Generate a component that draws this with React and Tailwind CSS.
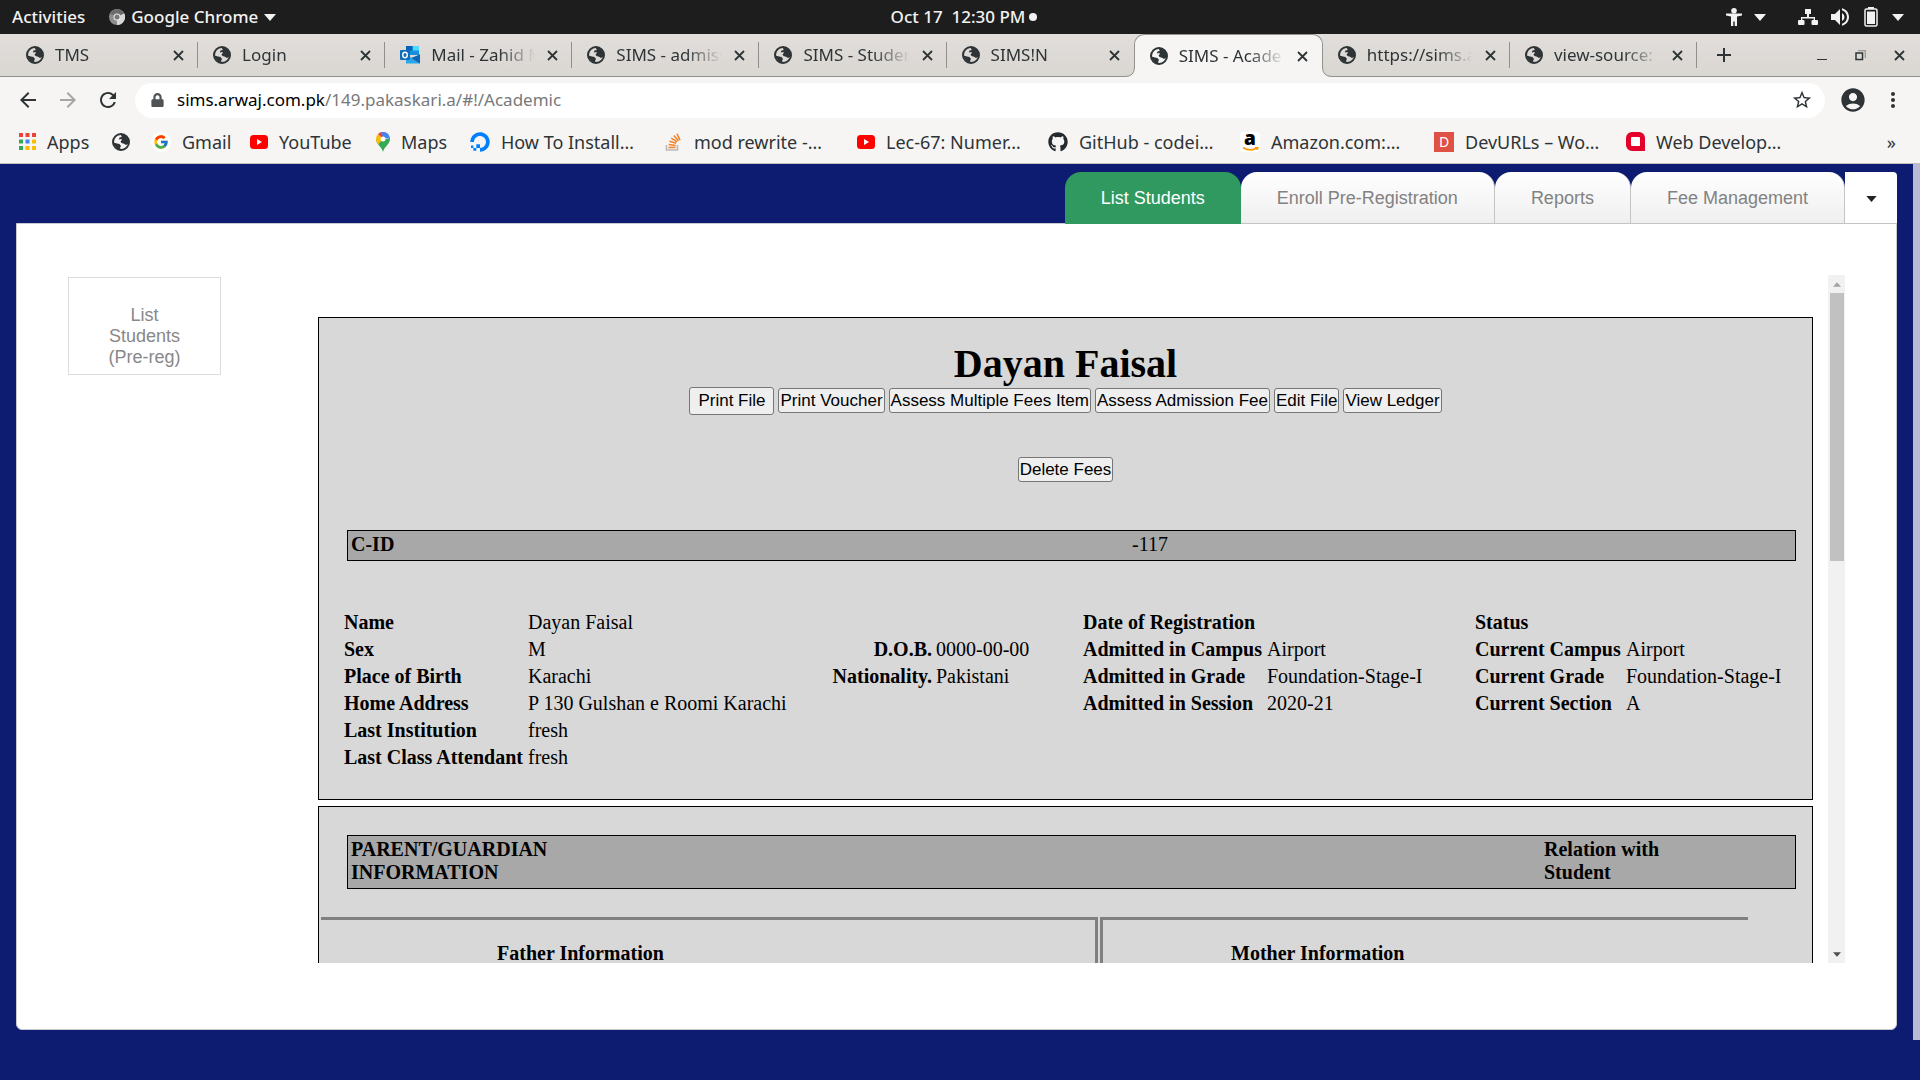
import React from "react";
import { FaGithub, FaDigitalOcean, FaLock } from "react-icons/fa";
import { FcGoogle } from "react-icons/fc";
import { MdAccountCircle, MdArrowBack, MdArrowForward, MdRefresh, MdStarBorder, MdMoreVert, MdVolumeUp, MdAdd } from "react-icons/md";

function Globe() {
  return (
    <svg viewBox="0 0 18 18" className="size-[18px] shrink-0" fill="none">
      <circle cx="9" cy="9" r="8" stroke="#2e3436" strokeWidth="2" />
      <path d="M6 1.5C2.500 3 1 6 1.500 9.500L5 10.500 7.500 11 9 13 8 15 9 17 5.500 16 2 12 1 8 3 3.500Z" fill="#2e3436" />
      <path d="M9.500 1L15 3.500 17 8 16.800 10.500 14 12 12 10.800 9.500 10 8.500 8.500 9.800 7 9.500 6 6.800 6.500 7.500 4.500 9.800 4 9 2.500Z" fill="#2e3436" />
    </svg>
  );
}

function Outlook() {
  return (
    <svg viewBox="0 0 20 20" className="size-5 shrink-0">
      <path d="M6 1h13v9H6z" fill="#1490df" />
      <path d="M12.500 1H19v4.500h-6.500z" fill="#50d9ff" />
      <path d="M6 1h6.500v4.500H6z" fill="#0364b8" />
      <path d="M6 9l7 5 7-5v9.500H6z" fill="#28a8ea" />
      <path d="M20 9.500v9L11 13z" fill="#1066b5" />
      <rect x="0" y="5" width="10" height="10" rx="1" fill="#0f6cbd" />
      <ellipse cx="5" cy="10" rx="2.300" ry="2.700" fill="none" stroke="#fff" strokeWidth="1.400" />
    </svg>
  );
}

function CloseX() {
  return (
    <svg viewBox="0 0 11 11" className="size-[11px]" stroke="#2e3436" strokeWidth="1.800">
      <path d="M1 1l9 9M10 1l-9 9" />
    </svg>
  );
}

function Down({ className }) {
  return (
    <svg viewBox="0 0 12 7" className={className} fill="currentColor">
      <path d="M0 0h12L6 7z" />
    </svg>
  );
}

const browserTabs = [
  { title: "TMS" },
  { title: "Login" },
  { title: "Mail - Zahid M", icon: <Outlook /> },
  { title: "SIMS - admiss" },
  { title: "SIMS - Studen" },
  { title: "SIMS!N", last: true },
  { title: "SIMS - Acade", active: true },
  { title: "https://sims.a" },
  { title: "view-source:" },
];

function BrowserTab({ tab }) {
  return (
    <div
      className={
        tab.active
          ? "relative z-10 flex h-[43px] min-w-0 flex-1 items-center rounded-t-[10px] border border-b-0 border-[#91918d] bg-[#f6f5f4] pr-3.5 pl-[15px]"
          : "relative flex h-[42px] min-w-0 flex-1 items-center pr-3.5 pl-[15px]"
      }
    >
      {tab.active && (
        <>
          <svg viewBox="0 0 10 10" className="absolute bottom-0 -left-2.5 size-2.5">
            <path d="M0 10V9.500Q9.500 9.500 9.500 0H10V10Z" fill="#f6f5f4" />
            <path d="M0 9.500Q9.500 9.500 9.500 0" fill="none" stroke="#91918d" />
          </svg>
          <svg viewBox="0 0 10 10" className="absolute -right-2.5 bottom-0 size-2.5">
            <path d="M10 10V9.500Q.5 9.500 .5 0H0V10Z" fill="#f6f5f4" />
            <path d="M10 9.500Q.5 9.500 .5 0" fill="none" stroke="#91918d" />
          </svg>
        </>
      )}
      {tab.icon || <Globe />}
      <span className="ml-[11px] min-w-0 flex-1 overflow-hidden whitespace-nowrap [mask-image:linear-gradient(to_right,black_65%,transparent)]">
        {tab.title}
      </span>
      <button type="button" aria-label={"Close " + tab.title} className="ml-3">
        <CloseX />
      </button>
      {!tab.active && !tab.last && <span className="absolute top-2 right-0 h-[26px] w-px bg-[#8f8f8b]" />}
    </div>
  );
}

function AppsIcon() {
  const colors = ["#ea4335", "#ea4335", "#ea4335", "#34a853", "#4285f4", "#fbbc05", "#34a853", "#fbbc05", "#fbbc05"];
  return (
    <svg viewBox="0 0 17 17" className="size-[17px]">
      {colors.map((c, i) => (
        <rect key={i} x={(i % 3) * 6.5} y={Math.floor(i / 3) * 6.5} width="4" height="4" fill={c} />
      ))}
    </svg>
  );
}

function MapsIcon() {
  return (
    <svg viewBox="0 0 14 20" className="h-5 w-3.5">
      <path d="M7 20C6 15 0 12 0 7h14c0 5-6 8-7 13z" fill="#34a853" />
      <path d="M0 7a7 7 0 0 1 2-5l5 5-5 5.500C1 11 0 9 0 7z" fill="#fbbc04" />
      <path d="M2 2l5 5 4.500-5.300A7 7 0 0 0 2 2z" fill="#ea4335" />
      <path d="M4.500.5A7 7 0 0 1 14 7L8 6z" fill="#4285f4" />
      <circle cx="7" cy="7" r="2.500" fill="#fff" />
    </svg>
  );
}

function YoutubeIcon() {
  return (
    <svg viewBox="0 0 18 14" className="h-3.5 w-[18px]">
      <rect width="18" height="14" rx="3.500" fill="#f00" />
      <path d="M7 4l5 3-5 3z" fill="#fff" />
    </svg>
  );
}

function StackIcon() {
  return (
    <svg viewBox="0 0 18 18" className="size-[18px]" fill="none">
      <path d="M1.500 12v5h11v-5" stroke="#bcbbbb" strokeWidth="1.600" />
      <path d="M3.500 14.500h7M3.700 11.500l7 .9M4.500 8.300l6.700 1.900M6.200 5.200l6 3.600M8.800 2.500l4.700 5.200M12 .8l3 6.300" stroke="#f48024" strokeWidth="1.500" />
    </svg>
  );
}

function AmazonIcon() {
  return (
    <span className="flex size-5 flex-col items-center rounded bg-white">
      <span className="h-[15px] font-['Open_Sans',sans-serif] text-[19px] leading-[12px] font-extrabold text-black">a</span>
      <svg viewBox="0 0 17 4" className="h-1 w-[17px]" fill="none" stroke="#ff9900" strokeWidth="1.500">
        <path d="M1 .5q7 4.500 14 .5M13 .3l3 .2-1 2.500" />
      </svg>
    </span>
  );
}

const bookmarks = [
  { label: "Apps", icon: <AppsIcon />, width: "w-[93px]" },
  { label: "", icon: <Globe />, width: "w-[39px]" },
  {
    label: "Gmail",
    icon: (
      <span className="flex size-5 items-center justify-center rounded-full bg-white">
        <FcGoogle className="size-4" />
      </span>
    ),
    width: "w-[99px]",
  },
  { label: "YouTube", icon: <YoutubeIcon />, width: "w-[126px]" },
  { label: "Maps", icon: <MapsIcon />, width: "w-[94px]" },
  { label: "How To Install…", icon: <FaDigitalOcean className="size-5 text-[#0080ff]" />, width: "w-[195px]" },
  { label: "mod rewrite -…", icon: <StackIcon />, width: "w-[192px]" },
  { label: "Lec-67: Numer…", icon: <YoutubeIcon />, width: "w-[191px]" },
  { label: "GitHub - codei…", icon: <FaGithub className="size-5 text-[#24292e]" />, width: "w-[192px]" },
  { label: "Amazon.com:…", icon: <AmazonIcon />, width: "w-[194px]" },
  {
    label: "DevURLs – Wo…",
    icon: <span className="flex size-5 items-center justify-center bg-[#de5144] text-sm text-white">D</span>,
    width: "w-[192px]",
  },
  {
    label: "Web Develop…",
    icon: <span className="size-[19px] rounded-md rounded-br-none border-[5px] border-[#e4002b] bg-white" />,
    width: "w-[192px]",
  },
];

function SystemBar() {
  return (
    <header className="flex h-[34px] items-center bg-[#1d1d1d] pr-4 pl-3 text-[17px] font-medium text-[#f2f2f2]">
      <div className="flex flex-1 items-center">
        <button type="button">Activities</button>
        <button type="button" className="ml-6 flex items-center">
          <svg viewBox="0 0 16 16" className="mr-1.5 size-4">
            <circle cx="8" cy="8" r="8" fill="#8d8d8d" />
            <path d="M8 8L15 4A8 8 0 0 1 8 16z" fill="#d8d8d8" />
            <path d="M8 8L1 4.500A8 8 0 0 1 15 4.500z" fill="#6c6c6c" />
            <circle cx="8" cy="8" r="3.500" fill="#ececec" />
            <circle cx="8" cy="8" r="2.500" fill="#777" />
          </svg>
          Google Chrome
          <Down className="ml-1.5 h-[7px] w-3" />
        </button>
      </div>
      <button type="button" className="ml-3 flex items-center gap-1 whitespace-pre">
        {"Oct 17  12:30 PM"}
        <span className="size-2 rounded-full bg-[#f2f2f2]" />
      </button>
      <div className="flex flex-1 items-center justify-end">
        <svg viewBox="0 0 16 18" className="h-[18px] w-4" fill="currentColor">
          <circle cx="8" cy="2.800" r="2.800" />
          <path d="M0 5.500h16v2L11 8.500V18H8.700v-4.500H7.300V18H5V8.500L0 7.500z" />
        </svg>
        <Down className="ml-3 h-[7px] w-3" />
        <svg viewBox="0 0 20 18" className="ml-8 h-[18px] w-5" fill="currentColor">
          <path d="M7 1h6v5h-2v3h6v3h-1.300v-1.500H4.300V12H3V9h6V6H7z" />
          <rect x="0" y="12" width="6.500" height="5" rx="1" />
          <rect x="13.500" y="12" width="6.500" height="5" rx="1" />
        </svg>
        <MdVolumeUp className="ml-2.5 size-6" />
        <svg viewBox="0 0 14 20" className="ml-3 h-5 w-3.5" fill="none">
          <path d="M4 1h6" stroke="currentColor" strokeWidth="2" />
          <rect x="1" y="2" width="12" height="17" rx="1.500" stroke="currentColor" strokeWidth="1.500" />
          <rect x="3" y="4.500" width="8" height="12.500" fill="currentColor" />
        </svg>
        <Down className="ml-3.5 h-[7px] w-3" />
      </div>
    </header>
  );
}

function Browser() {
  return (
    <div className="bg-[#f6f5f4] text-[#2e3436]">
      <div className="flex h-[43px] border-b border-[#91918d] bg-linear-to-b from-[#e1dedb] to-[#dad6d2] pl-[11px] text-[17px]">
        <div className="flex min-w-0 flex-1">
          {browserTabs.map((tab) => (
            <BrowserTab key={tab.title} tab={tab} />
          ))}
        </div>
        <div className="flex w-[223px] items-center px-[15px]">
          <button type="button" aria-label="New tab">
            <MdAdd className="size-6" />
          </button>
          <span className="flex-1" />
          <button type="button" aria-label="Minimize" className="flex h-3 items-end">
            <span className="mb-px h-px w-2.5 bg-[#2e3436]" />
          </button>
          <button type="button" aria-label="Restore" className="ml-7">
            <svg viewBox="0 0 11 11" className="size-[11px]" fill="none">
              <path d="M3 .7h7.300V8" stroke="#9a9a98" strokeWidth="1.300" />
              <rect x="1" y="3" width="6.500" height="6.500" stroke="#2e3436" strokeWidth="1.500" />
            </svg>
          </button>
          <button type="button" aria-label="Close window" className="ml-7">
            <CloseX />
          </button>
        </div>
      </div>
      <div className="flex h-[46px] items-center pr-[15px] pl-4">
        <button type="button" aria-label="Back">
          <MdArrowBack className="size-6" />
        </button>
        <button type="button" aria-label="Forward" className="ml-4 text-[#a5a6a5]">
          <MdArrowForward className="size-6" />
        </button>
        <button type="button" aria-label="Reload" className="ml-4">
          <MdRefresh className="size-6" />
        </button>
        <div className="ml-[15px] flex h-[35px] flex-1 items-center rounded-full bg-white pr-3 pl-4 text-[17px]">
          <FaLock className="h-3.5 w-[13px] text-[#505355]" />
          <span className="ml-[13px] flex-1 text-[#77797b]">
            <span className="text-black">sims.arwaj.com.pk</span>/149.pakaskari.a/#!/Academic
          </span>
          <button type="button" aria-label="Bookmark this page">
            <MdStarBorder className="size-[22px]" />
          </button>
        </div>
        <button type="button" aria-label="Profile" className="ml-3.5">
          <MdAccountCircle className="size-7" />
        </button>
        <button type="button" aria-label="Menu" className="ml-3.5">
          <MdMoreVert className="size-6" />
        </button>
      </div>
      <nav className="flex h-[41px] items-center border-b border-[#c4c1be] pr-6 pb-[3px] pl-[19px] text-[18px]">
        {bookmarks.map((b, i) => (
          <a key={i} href="#" aria-label={b.label || "Site"} className={"flex h-7 shrink-0 items-center gap-[11px] leading-7 whitespace-nowrap " + b.width}>
            {b.icon}
            {b.label}
          </a>
        ))}
        <button type="button" className="ml-auto leading-7">»</button>
      </nav>
    </div>
  );
}

const pageTabs = ["Enroll Pre-Registration", "Reports", "Fee Management"];

function PageTabs() {
  return (
    <nav className="relative z-10 -mb-px flex h-[52px] justify-end text-[18px]">
      <a href="#" className="flex items-center rounded-t-2xl bg-[#2f995f] px-9 text-white">
        List Students
      </a>
      {pageTabs.map((t) => (
        <a
          key={t}
          href="#"
          className="flex items-center rounded-t-2xl border-r border-b border-[#c4c4c4] bg-linear-to-b from-white to-[#efefef] px-9 pt-px text-[#828282]"
        >
          {t}
        </a>
      ))}
      <button type="button" aria-label="More" className="flex w-[52px] items-center justify-center rounded-tr-sm border-b border-[#c4c4c4] bg-white pt-0.5 text-[#222]">
        <Down className="h-1.5 w-[11px]" />
      </button>
    </nav>
  );
}

function FormButton({ children, big }) {
  return (
    <button
      type="button"
      className={
        "rounded-[3px] border border-[#767676] bg-[#efefef] font-['Liberation_Sans',sans-serif] text-[17px] whitespace-nowrap text-black " +
        (big ? "h-7 px-2 pb-px" : "h-[25px] px-px")
      }
    >
      {children}
    </button>
  );
}

const personal = [
  ["Name", "Dayan Faisal", "", ""],
  ["Sex", "M", "D.O.B.", "0000-00-00"],
  ["Place of Birth", "Karachi", "Nationality.", "Pakistani"],
  ["Home Address", "P 130 Gulshan e Roomi Karachi", "", ""],
  ["Last Institution", "fresh", "", ""],
  ["Last Class Attendant", "fresh", "", ""],
];
const admission = [
  ["Date of Registration", ""],
  ["Admitted in Campus", "Airport"],
  ["Admitted in Grade", "Foundation-Stage-I"],
  ["Admitted in Session", "2020-21"],
];
const current = [
  ["Status", ""],
  ["Current Campus", "Airport"],
  ["Current Grade", "Foundation-Stage-I"],
  ["Current Section", "A"],
];

function PairTable({ rows, labelWidth }) {
  return (
    <table className="w-full table-fixed self-start text-left whitespace-nowrap">
      <tbody>
        {rows.map(([k, v]) => (
          <tr key={k} className="h-[27px] align-top">
            <th scope="row" className={labelWidth}>{k}</th>
            <td>{v}</td>
          </tr>
        ))}
      </tbody>
    </table>
  );
}

function StudentPanel() {
  return (
    <section className="border border-black bg-[#d8d8d8] pt-[23px] pb-[26px]">
      <h1 className="text-center text-[40px] leading-[46px] font-bold">Dayan Faisal</h1>
      <div className="flex items-start justify-center gap-1">
        <FormButton big>Print File</FormButton>
        <div className="flex gap-1 pt-px">
          <FormButton>Print Voucher</FormButton>
          <FormButton>Assess Multiple Fees Item</FormButton>
          <FormButton>Assess Admission Fee</FormButton>
          <FormButton>Edit File</FormButton>
          <FormButton>View Ledger</FormButton>
        </div>
      </div>
      <div className="mt-[42px] flex justify-center">
        <FormButton>Delete Fees</FormButton>
      </div>
      <div className="mt-12 mr-4 ml-7 grid grid-cols-[542fr_458fr] border border-black bg-[#a8a8a8] px-[3px] pt-0.5 pb-1">
        <b>C-ID</b>
        <span>-117</span>
      </div>
      <div className="mt-[50px] mr-px ml-[25px] grid grid-cols-[739fr_392fr_336fr]">
        <table className="w-full text-left whitespace-nowrap">
          <tbody>
            {personal.map(([a, b, c, d]) => (
              <tr key={a} className="h-[27px] align-top">
                <th scope="row" className="w-[184px]">{a}</th>
                <td>{b}</td>
                <th scope="row" className="pr-1 text-right">{c}</th>
                <td className="w-[147px]">{d}</td>
              </tr>
            ))}
          </tbody>
        </table>
        <PairTable rows={admission} labelWidth="w-[184px]" />
        <PairTable rows={current} labelWidth="w-[151px]" />
      </div>
    </section>
  );
}

function ParentPanel() {
  return (
    <section className="mt-1.5 border border-black bg-[#d8d8d8] pt-7 pb-10">
      <div className="mr-4 ml-7 flex justify-between border border-black bg-[#a8a8a8] px-[3px] pt-0.5 pb-1 font-bold">
        <span>
          PARENT/GUARDIAN
          <br />
          INFORMATION
        </span>
        <span className="w-[248px]">
          Relation with
          <br />
          Student
        </span>
      </div>
      <div className="mt-7 mr-16 ml-0.5 grid grid-cols-[777fr_648fr] gap-0.5 font-bold">
        <div className="h-32 border-t-[3px] border-r-[3px] border-[#808080] pt-[22px] pl-44">Father Information</div>
        <div className="h-32 border-t-[3px] border-l-[3px] border-[#808080] pt-[22px] pl-32">Mother Information</div>
      </div>
    </section>
  );
}

function Scrollbar() {
  return (
    <div className="ml-[15px] flex w-[17px] flex-col items-center bg-[#f1f1f1]">
      <span className="flex h-[18px] shrink-0 items-center text-[#a3a3a3]">
        <Down className="h-[5px] w-2 rotate-180" />
      </span>
      <span className="h-[39%] w-3.5 bg-[#c1c1c1]" />
      <span className="mt-auto flex h-[18px] shrink-0 items-center text-[#505050]">
        <Down className="h-[5px] w-2" />
      </span>
    </div>
  );
}

export default function App() {
  return (
    <div className="flex h-screen flex-col overflow-hidden font-['Noto_Sans',sans-serif]">
      <SystemBar />
      <Browser />
      <div className="flex min-h-0 flex-1 bg-[#0d1c70] font-['Liberation_Sans',sans-serif]">
        <div className="flex min-w-0 flex-1 flex-col px-4 pt-2 pb-[50px]">
          <PageTabs />
          <main className="flex min-h-0 flex-1 rounded-b-md border border-[#c8cad0] bg-white px-[51px] pt-[51px] pb-[66px]">
            <a
              href="#"
              className="mt-0.5 h-[98px] w-[153px] shrink-0 border border-[#dcdcdc] px-9 pt-[27px] text-center text-[18px] leading-[21px] text-[#888]"
            >
              List Students (Pre-reg)
            </a>
            <div className="ml-[97px] min-h-0 min-w-0 flex-1 overflow-hidden pt-[42px] font-['Liberation_Serif',serif] text-[20px] leading-[23px] text-black">
              <StudentPanel />
              <ParentPanel />
            </div>
            <Scrollbar />
          </main>
        </div>
        <div className="mb-10 w-[7px] bg-[#b9bbd5]" />
      </div>
    </div>
  );
}
